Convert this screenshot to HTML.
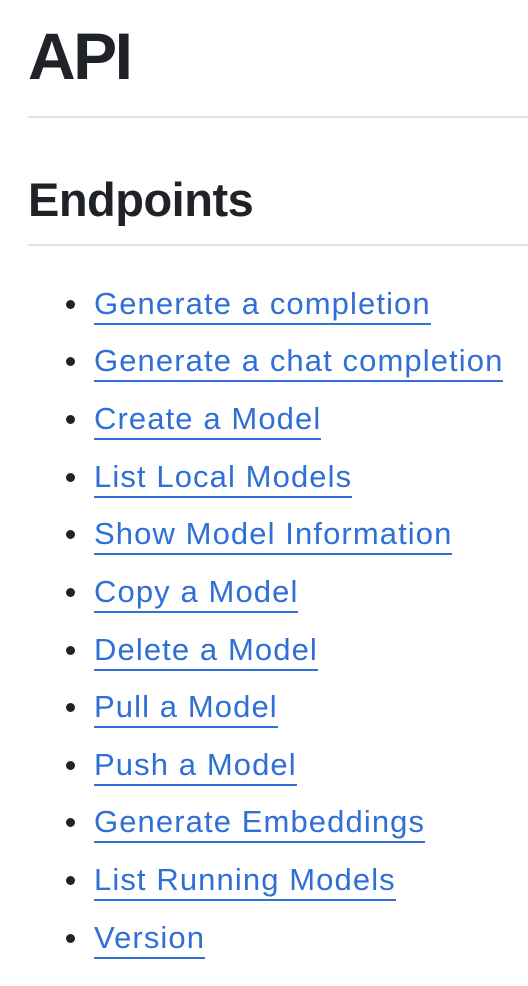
<!DOCTYPE html>
<html><head><meta charset="utf-8"><style>
html,body{margin:0;padding:0;background:#fff;width:528px;height:986px;overflow:hidden}
body{font-family:"Liberation Sans",Arial,sans-serif;color:#1f2328;position:relative}
.h1{position:absolute;left:28px;top:18px;font-size:66px;font-weight:bold;line-height:76px;letter-spacing:-2.5px}
.l1{position:absolute;left:28px;top:116px;width:500px;height:2px;background:#dfe3e8}
.h2{position:absolute;left:28px;top:172px;font-size:47px;font-weight:bold;line-height:56px;letter-spacing:-0.5px}
.l2{position:absolute;left:28px;top:244px;width:500px;height:2px;background:#dfe3e8}
.it{position:absolute;left:94px;font-size:31px;line-height:36px;color:#2f6fd6;white-space:nowrap;letter-spacing:1.1px}
.it span{border-bottom:2px solid #2f6fd6;padding-bottom:2px}
.b{position:absolute;left:66px;width:9px;height:9px;border-radius:50%;background:#1f2328}
</style></head><body>
<div class="h1">API</div>
<div class="l1"></div>
<div class="h2">Endpoints</div>
<div class="l2"></div>
<div class="b" style="top:300px"></div><div class="it" style="top:286px"><span>Generate a completion</span></div>
<div class="b" style="top:357px"></div><div class="it" style="top:343px"><span>Generate a chat completion</span></div>
<div class="b" style="top:415px"></div><div class="it" style="top:401px"><span>Create a Model</span></div>
<div class="b" style="top:473px"></div><div class="it" style="top:459px"><span>List Local Models</span></div>
<div class="b" style="top:530px"></div><div class="it" style="top:516px"><span>Show Model Information</span></div>
<div class="b" style="top:588px"></div><div class="it" style="top:574px"><span>Copy a Model</span></div>
<div class="b" style="top:646px"></div><div class="it" style="top:632px"><span>Delete a Model</span></div>
<div class="b" style="top:703px"></div><div class="it" style="top:689px"><span>Pull a Model</span></div>
<div class="b" style="top:761px"></div><div class="it" style="top:747px"><span>Push a Model</span></div>
<div class="b" style="top:818px"></div><div class="it" style="top:804px"><span>Generate Embeddings</span></div>
<div class="b" style="top:876px"></div><div class="it" style="top:862px"><span>List Running Models</span></div>
<div class="b" style="top:934px"></div><div class="it" style="top:920px"><span>Version</span></div>
</body></html>
